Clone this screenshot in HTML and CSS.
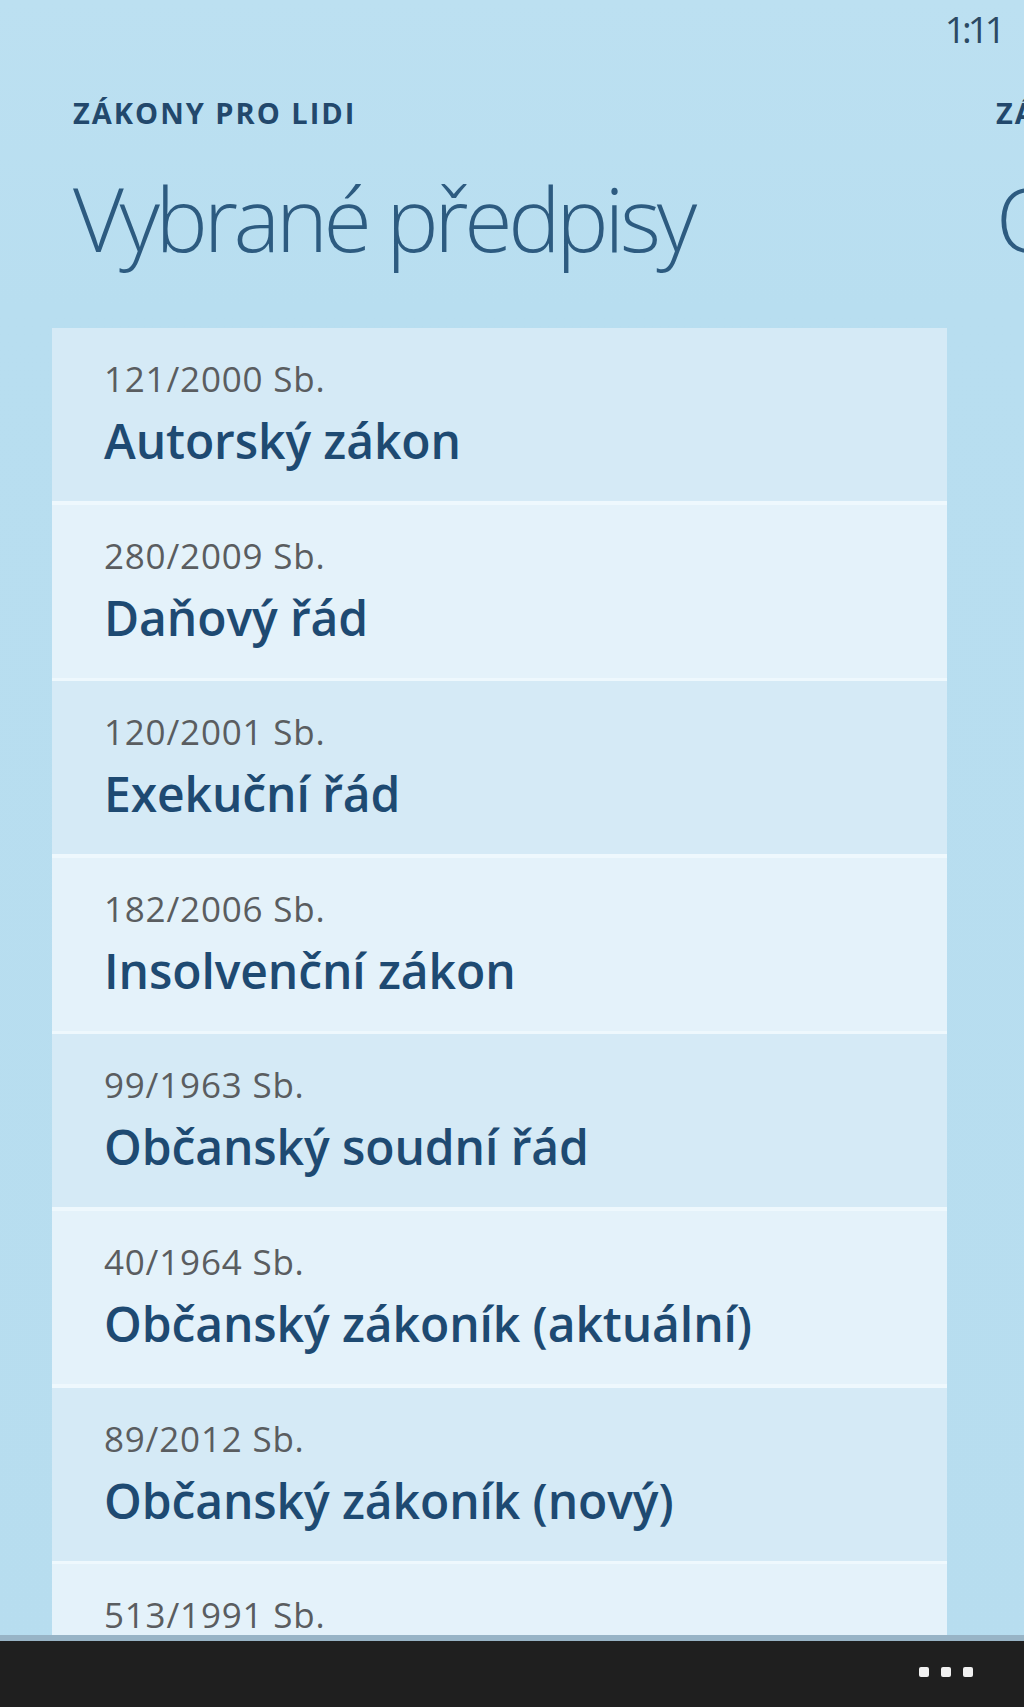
FILE: index.html
```html
<!DOCTYPE html>
<html lang="cs">
<head>
<meta charset="utf-8">
<title>Zákony pro lidi</title>
<link rel="stylesheet" href="styles.css">
</head>
<body>
<div class="screen">
  <div class="status-bar"><span class="clock">1:11</span></div>
  <div class="panorama">
    <section class="pane">
      <div class="pane-head">
        <div class="app-title">ZÁKONY PRO LIDI</div>
        <h1 class="pane-title">Vybrané předpisy</h1>
      </div>
      <ul class="law-list">
        <li class="law odd"><div class="law-num">121/2000 Sb.</div><div class="law-name">Autorský zákon</div></li>
        <li class="law even"><div class="law-num">280/2009 Sb.</div><div class="law-name">Daňový řád</div></li>
        <li class="law odd"><div class="law-num">120/2001 Sb.</div><div class="law-name">Exekuční řád</div></li>
        <li class="law even"><div class="law-num">182/2006 Sb.</div><div class="law-name">Insolvenční zákon</div></li>
        <li class="law odd"><div class="law-num">99/1963 Sb.</div><div class="law-name">Občanský soudní řád</div></li>
        <li class="law even"><div class="law-num">40/1964 Sb.</div><div class="law-name">Občanský zákoník (aktuální)</div></li>
        <li class="law odd"><div class="law-num">89/2012 Sb.</div><div class="law-name">Občanský zákoník (nový)</div></li>
        <li class="law even"><div class="law-num">513/1991 Sb.</div></li>
      </ul>
    </section>
    <section class="pane">
      <div class="pane-head">
        <div class="app-title">ZÁKONY PRO LIDI</div>
        <h1 class="pane-title">Oblíbené</h1>
      </div>
    </section>
  </div>
  <div class="app-bar">
    <div class="more"><span class="dot"></span><span class="dot"></span><span class="dot"></span></div>
  </div>
</div>
</body>
</html>
```
FILE: styles.css
```css
html, body {
  margin: 0;
  padding: 0;
}
body {
  background: #b9dff1;
  font-family: "Open Sans", "Noto Sans", sans-serif;
  overflow: hidden;
}
.screen {
  height: 1707px;
  display: flex;
  flex-direction: column;
  background: linear-gradient(to bottom, #bce0f1 0%, #b8def0 18%, #b7ddef 100%);
}
.status-bar {
  flex: 0 0 70px;
  display: flex;
  justify-content: flex-end;
  box-sizing: border-box;
  padding: 7px 22px 0 0;
}
.clock {
  font-size: 37px;
  line-height: 44px;
  letter-spacing: -4px;
  color: #2b4a64;
}
.panorama {
  flex: 1 1 auto;
  min-height: 0;
  display: flex;
  overflow: hidden;
  padding-left: 52px;
}
.pane {
  flex: 0 0 923px;
  display: flex;
  flex-direction: column;
}
.pane-head {
  flex: 0 0 auto;
  padding-left: 21px;
  white-space: nowrap;
}
.app-title {
  margin-top: 27px;
  font-size: 29px;
  line-height: 32px;
  font-weight: 700;
  letter-spacing: 2px;
  color: #22486c;
}
.pane-title {
  margin: 39px 0 0;
  font-size: 88px;
  line-height: 100px;
  font-weight: 300;
  letter-spacing: -4.3px;
  color: #2d5b80;
}
.law-list {
  flex: 0 0 auto;
  list-style: none;
  margin: 60px 0 0;
  padding: 0;
  width: 895px;
  display: flex;
  flex-direction: column;
  gap: 3.6px;
  background: #eef8fd;
}
.law {
  box-sizing: border-box;
  height: 173px;
  padding: 29px 0 0 52px;
  flex: 0 0 auto;
}
.law.odd {
  background: #d5eaf6;
}
.law.even {
  background: #e4f2fa;
}
.law-num {
  font-size: 35px;
  line-height: 44px;
  letter-spacing: 0.8px;
  color: #5a5d60;
}
.law-name {
  margin-top: 10px;
  font-size: 48px;
  line-height: 60px;
  font-weight: 600;
  letter-spacing: -0.1px;
  color: #1e4a72;
}
.app-bar {
  flex: 0 0 72px;
  box-sizing: border-box;
  border-top: 6px solid #98b4c6;
  background: #1f1f1f;
  display: flex;
  justify-content: flex-end;
  align-items: flex-start;
  padding: 26px 51px 0 0;
}
.more {
  display: flex;
  gap: 12px;
}
.dot {
  width: 10px;
  height: 10px;
  border-radius: 2px;
  background: #f0f0f0;
}
```
